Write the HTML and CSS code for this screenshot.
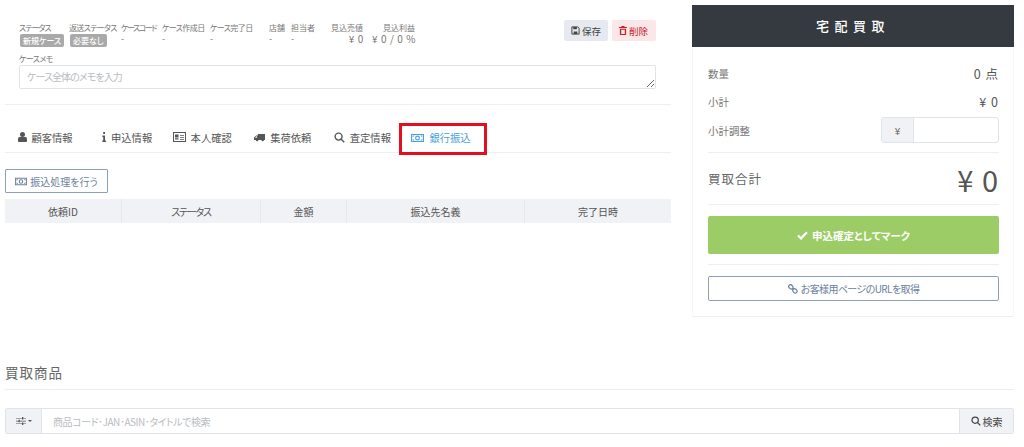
FILE: index.html
```html
<!DOCTYPE html>
<html lang="ja">
<head>
<meta charset="utf-8">
<title>宅配買取</title>
<link rel="stylesheet" href="styles.css">
</head>
<body>
<svg class="defs" width="0" height="0" aria-hidden="true">
  <symbol id="money" viewBox="0 0 16 12"><path fill="currentColor" fill-rule="evenodd" d="M0 1h16v10H0zM1.200 2.200v7.600h13.600V2.200z"/><path fill="currentColor" d="M2 3h2.400L2 5.400zM14 3v2.400L11.600 3zM2 9V6.600L4.400 9zM14 9h-2.400L14 6.600z"/><path fill="currentColor" fill-rule="evenodd" d="M8 3a3 3 0 1 1 0 6 3 3 0 0 1 0-6zm0 1.400a1.600 1.600 0 1 0 0 3.200 1.600 1.600 0 0 0 0-3.200z"/></symbol>
  <symbol id="search" viewBox="0 0 12 12"><path fill="none" stroke="currentColor" stroke-width="1.500" d="M5 1.200a3.800 3.800 0 1 1 0 7.600 3.800 3.800 0 0 1 0-7.600zM7.800 7.800l3.400 3.400"/></symbol>
</svg>
<div class="top">
  <main class="case">
    <div class="case-head">
      <div class="stats">
        <div class="stat s1"><div class="lab k1">ステータス</div><span class="badge">新規ケース</span></div>
        <div class="stat s2"><div class="lab k4">返送ステータス</div><span class="badge">必要なし</span></div>
        <div class="stat s3"><div class="lab k2">ケースコード</div><div class="val">-</div></div>
        <div class="stat s4"><div class="lab k3">ケース作成日</div><div class="val">-</div></div>
        <div class="stat s5"><div class="lab k3">ケース完了日</div><div class="val">-</div></div>
        <div class="stat s6"><div class="lab">店舗</div><div class="val">-</div></div>
        <div class="stat s7"><div class="lab">担当者</div><div class="val">-</div></div>
        <div class="stat s8"><div class="lab">見込売値</div><div class="val num">¥ 0</div></div>
        <div class="stat s9"><div class="lab">見込利益</div><div class="val num">¥ 0 / 0 %</div></div>
      </div>
      <div class="actions">
        <button class="act save"><svg width="9" height="9" viewBox="0 0 10 10"><path fill="none" stroke="currentColor" stroke-width="1.100" d="M1 1h6.500L9 2.500V9H1z"/><path fill="currentColor" d="M2.500 1h4v2.500h-4zM3 6h4v3H3z"/></svg>保存</button>
        <button class="act del"><svg width="8" height="9" viewBox="0 0 9 10"><path fill="currentColor" fill-rule="evenodd" d="M3 0h3l.5 1H9v1.200H0V1h2.500zM1 3h7v7H1zM2.500 4.200v4.600h4V4.200z"/></svg>削除</button>
      </div>
    </div>
    <div class="memo">
      <div class="lab k3">ケースメモ</div>
      <textarea class="memo-box" placeholder="ケース全体のメモを入力"></textarea>
    </div>
    <nav class="tabs">
      <a class="tab"><svg width="9" height="10" viewBox="0 0 9 10"><path fill="currentColor" d="M4.500 0a2.500 2.500 0 0 1 0 5 2.500 2.500 0 0 1 0-5zM1.500 5h6C8.500 5 9 6 9 7.500V9c0 .6-.4 1-1 1H1c-.6 0-1-.4-1-1V7.500C0 6 .5 5 1.500 5z"/></svg>顧客情報</a>
      <a class="tab"><svg width="4" height="10" viewBox="0 0 4 10"><path fill="currentColor" d="M1.200 0h1.800v2H1.200zM.3 3.500H3v5h1V10H.3V8.500h.9V5H.3z"/></svg>申込情報</a>
      <a class="tab"><svg width="13" height="10" viewBox="0 0 13 10"><path fill="currentColor" fill-rule="evenodd" d="M0 0h13v10H0zM1 1v8h11V1zM2 2.500h3.500v3H2zM2 6.300h3.500v1.300H2zM7 3h4v.8H7zM7 5h4v.8H7zM7 7h4v.8H7z"/></svg>本人確認</a>
      <a class="tab"><svg width="11" height="9" viewBox="0 0 13 10"><path fill="currentColor" fill-rule="evenodd" d="M4.500 1H13v7h-1.200a1.500 1.500 0 0 1-3 0H5.200a1.500 1.500 0 0 1-3 0H0V5l2.500-2.500h2zM2.800 3.500 1 5.200h2.500V3.500z"/></svg>集荷依頼</a>
      <a class="tab"><svg width="11" height="11"><use href="#search"/></svg>査定情報</a>
      <a class="tab on"><svg width="13" height="10"><use href="#money"/></svg>銀行振込</a>
    </nav>
    <section class="panel">
      <button class="outline"><svg width="12" height="9"><use href="#money"/></svg>振込処理を行う</button>
      <div class="thead">
        <div class="th c1">依頼ID</div>
        <div class="th c2 tight">ステータス</div>
        <div class="th c3">金額</div>
        <div class="th c4">振込先名義</div>
        <div class="th c5">完了日時</div>
      </div>
    </section>
  </main>
  <aside class="side">
    <h2 class="side-title">宅配買取</h2>
    <div class="side-body">
      <div class="row r1"><span class="k">数量</span><span class="v">0 点</span></div>
      <div class="row r2"><span class="k">小計</span><span class="v">¥ 0</span></div>
      <div class="row r3"><span class="k">小計調整</span>
        <span class="adj"><span class="adj-pre">¥</span><span class="adj-in"></span></span>
      </div>
      <div class="total"><span class="total-k">買取合計</span><span class="total-v">¥ 0</span></div>
      <button class="mark"><svg width="11" height="9" viewBox="0 0 11 9"><path fill="none" stroke="currentColor" stroke-width="2.300" d="M1 4.500 4 7.400 10 1.200"/></svg>申込確定としてマーク</button>
      <button class="url"><svg width="10" height="10" viewBox="0 0 10 10"><path fill="none" stroke="currentColor" stroke-width="1.200" d="M1.200 1.200a1.800 1.800 0 0 1 2.500 0l1 1a1.800 1.800 0 0 1-2.500 2.500l-1-1a1.800 1.800 0 0 1 0-2.500zM5.300 5.300a1.800 1.800 0 0 1 2.500 0l1 1a1.800 1.800 0 0 1-2.500 2.500l-1-1a1.800 1.800 0 0 1 0-2.500z"/></svg>お客様用ページのURLを取得</button>
    </div>
  </aside>
</div>
<section class="goods">
  <h3 class="goods-title">買取商品</h3>
  <div class="searchbar">
    <span class="filter"><svg width="10" height="8" viewBox="0 0 10 8"><path fill="currentColor" d="M0 .9h10v.7H0zM0 3.700h10v.7H0zM0 6.400h10v.7H0zM6 0h1.300v2.500H6zM2.500 2.800h1.300v2.500H2.500zM6 5.500h1.300V8H6z"/></svg><i class="caret"></i></span>
    <input class="q" placeholder="商品コード･JAN･ASIN･タイトルで検索">
    <button class="go"><svg width="10" height="10"><use href="#search"/></svg>検索</button>
  </div>
</section>
</body>
</html>
```
FILE: styles.css
```css
* { box-sizing: border-box; }
html, body { margin: 0; padding: 0; }
body {
  width: 1024px;
  height: 447px;
  overflow: hidden;
  background: #fff;
  color: #555;
  font-family: "Noto Sans CJK JP", "Noto Sans", sans-serif;
  font-feature-settings: "palt";
}
.defs { position: absolute; }
button { font-family: inherit; font-feature-settings: inherit; cursor: pointer; }
svg { display: block; flex: none; }

.top { display: flex; height: 360px; padding-left: 5px; }
.case { width: 666px; }

.case-head { display: flex; justify-content: space-between; height: 49px; padding: 22px 15px 0 14px; }
.stats { display: flex; }
.stat { flex: none; }
.s1 { width: 50px; } .s2 { width: 52px; } .s3 { width: 41px; } .s4 { width: 48px; }
.s5 { width: 59px; } .s6 { width: 22px; } .s7 { width: 40px; } .s8 { width: 52px; }
.s8 .val { text-align: right; padding-right: 19px; }
.s9 { width: 33px; }
.s9 .val { text-align: right; margin-left: -11px; }
.lab { font-size: 8px; line-height: 11px; color: #777; white-space: nowrap; }
.k1 { letter-spacing: -1px; }
.k2 { letter-spacing: -1.500px; }
.k3 { letter-spacing: -.6px; }
.k4 { letter-spacing: -.7px; }
.val { font-size: 9px; line-height: 12px; color: #777; white-space: nowrap; }
.num { font-size: 10px; letter-spacing: .6px; }
.badge { display: block; width: fit-content; margin-top: 1px; margin-left: 1px; background: #a9a9a9; color: #fff; font-size: 8px; font-weight: 500; line-height: 13px; padding: 0 3px; border-radius: 2px; }

.actions { display: flex; gap: 4px; height: 21px; margin-top: -2px; }
.act { display: flex; align-items: center; gap: 2px; border: 0; border-radius: 2px; padding: 0 5px 0 7px; font-size: 9.500px; width: 44px; }
.save { background: #e6e9ef; color: #444; }
.del { background: #fbe6e8; color: #c5222a; }

.memo { padding: 4px 15px 15px 14px; border-bottom: 1px solid #eceef2; height: 56px; }
.memo .lab { height: 12px; line-height: 11px; }
.memo-box { display: block; width: 100%; height: 24px; border: 1px solid #dfe3ea; border-radius: 2px; padding: 3px 7px; font-family: inherit; font-feature-settings: inherit; font-size: 10px; letter-spacing: -.9px; line-height: 16px; margin: 0; outline: 0; }
.memo-box::placeholder, .q::placeholder { color: #b9bcc2; opacity: 1; }

.tabs { display: flex; height: 48px; padding: 18px 0 0 13px; border-bottom: 1px solid #eceef2; }
.tab { display: flex; align-items: center; justify-content: flex-end; gap: 5px; flex: none; width: 79.600px; height: 32px; padding: 0 25px 4px 0; font-size: 10.300px; color: #555; white-space: nowrap; }
.tab:first-child { gap: 4px; }
.tab.on { color: #4a9fe0; width: 88px; margin-left: -17.400px; padding: 0 16px 3px 0; outline: 3.500px solid #e60e1e; outline-offset: -3.500px; }

.panel { padding-top: 16px; }
.outline { display: flex; align-items: center; justify-content: center; gap: 3px; width: 103px; height: 24px; background: #fff; border: 1px solid #8e9fbd; border-radius: 1px; color: #6d7f9c; font-size: 10px; padding: 0; }
.thead { display: flex; margin-top: 6px; height: 24px; background: #f1f2f6; width: 666px; }
.th { display: flex; align-items: center; justify-content: center; font-size: 10px; color: #555; border-left: 1px solid #e6e8ee; }
.th:first-child { border-left: 0; }
.tight { letter-spacing: -1.200px; }
.c1 { width: 116px; } .c2 { width: 139px; } .c3 { width: 86px; } .c4 { width: 178px; } .c5 { width: 147px; }

.side { width: 322px; margin-left: 21px; height: 317px; border-bottom: 1px solid #eceef2; }
.side-title { margin: 0; height: 42px; margin-top: 5px; background: #343a40; color: #fff; font-size: 13px; font-weight: 500; line-height: 42px; text-align: center; letter-spacing: 5.500px; }
.side-body { padding: 0 14px 0 15px; height: 270px; border-left: 1px solid #f6f6f8; border-right: 1px solid #f6f6f8; }
.row { display: flex; justify-content: space-between; align-items: center; }
.k { font-size: 10.500px; color: #777; }
.v { font-size: 12.500px; color: #555; letter-spacing: 1px; }
.r1 { padding-top: 13px; height: 40px; }
.r2 { height: 28px; }
.r3 { height: 26px; margin-top: 2px; }
.adj { display: flex; width: 118px; height: 26px; border: 1px solid #dfe3ea; border-radius: 3px; }
.adj-pre { width: 32px; background: #f1f2f6; border-right: 1px solid #dfe3ea; font-size: 10px; display: flex; align-items: center; justify-content: center; color: #666; }
.adj-in { flex: 1; }
.total { display: flex; justify-content: space-between; align-items: center; margin-top: 9px; border-top: 1px solid #eceef2; border-bottom: 1px solid #eceef2; height: 53px; }
.total-k { font-size: 12.500px; color: #666; letter-spacing: 1px; }
.total-v { font-size: 29px; color: #555; letter-spacing: 1px; }
.mark { display: flex; align-items: center; justify-content: center; gap: 4px; width: 100%; height: 38px; margin-top: 11px; background: #9ccc65; color: #fff; border: 0; border-radius: 2px; font-size: 10.500px; font-weight: 700; }
.url { display: flex; align-items: center; justify-content: center; gap: 3px; width: 100%; height: 25px; margin-top: 22px; background: #fff; border: 1px solid #8e9fbd; border-radius: 2px; color: #6d7f9c; font-size: 10px; letter-spacing: -.6px; padding: 0; position: relative; }
.url::before { content: ""; position: absolute; left: -1px; right: -1px; top: -13px; border-top: 1px solid #eceef2; }

.goods { padding: 0 10px 0 5px; }
.goods-title { margin: 0; height: 30px; font-size: 13.500px; font-weight: 400; color: #666; line-height: 24px; letter-spacing: 1px; border-bottom: 1px solid #eceef2; }
.searchbar { display: flex; height: 26px; margin-top: 18px; border: 1px solid #dfe3ea; border-radius: 2px; }
.filter { display: flex; align-items: center; justify-content: center; gap: 2px; width: 36px; background: #f1f2f6; border-right: 1px solid #dfe3ea; color: #555; }
.caret { border: 2px solid transparent; border-top-color: #555; border-bottom: 0; }
.q { flex: 1; border: 0; outline: 0; padding: 0 11px; font-family: inherit; font-feature-settings: inherit; font-size: 10px; letter-spacing: -.45px; }
.go { display: flex; align-items: center; justify-content: center; gap: 2px; width: 54px; border: 0; border-left: 1px solid #dfe3ea; background: #f1f2f6; color: #444; font-size: 10px; padding: 0; }
```
